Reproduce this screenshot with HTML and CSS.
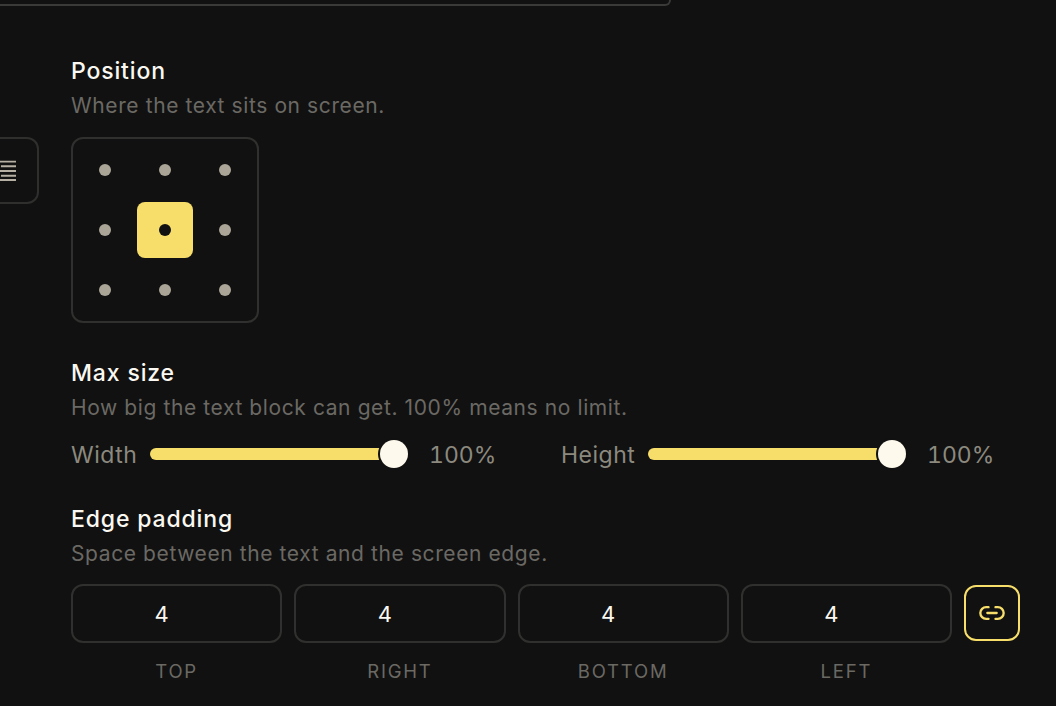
FILE: index.html
```html
<!DOCTYPE html>
<html lang="en">
  <head>
    <meta charset="UTF-8" />
    <title>Text settings</title>
    <link rel="stylesheet" href="styles.css">
  </head>
  <body>
    <div class="top-field"></div>

    <div class="layout">
      <div class="side">
        <div class="align-button">
          <svg class="align-icon" width="17" height="22" viewBox="0 0 17 22">
            <path d="M0 1h17M1 6h16M0 11h17M1 16h16M0 20.500h17" />
          </svg>
        </div>
      </div>

      <div class="content">
        <section class="position">
          <h2>Position</h2>
          <p class="hint">Where the text sits on screen.</p>
          <div class="pos-grid">
            <div class="cell"><span class="dot"></span></div>
            <div class="cell"><span class="dot"></span></div>
            <div class="cell"><span class="dot"></span></div>
            <div class="cell"><span class="dot"></span></div>
            <div class="cell active"><span class="dot"></span></div>
            <div class="cell"><span class="dot"></span></div>
            <div class="cell"><span class="dot"></span></div>
            <div class="cell"><span class="dot"></span></div>
            <div class="cell"><span class="dot"></span></div>
          </div>
        </section>

        <section class="max-size">
          <h2>Max size</h2>
          <p class="hint">How big the text block can get. 100% means no limit.</p>
          <div class="sliders">
            <div class="slider-group">
              <span class="slider-label">Width</span>
              <div class="track"><span class="thumb"></span></div>
              <span class="slider-value">100%</span>
            </div>
            <div class="slider-group">
              <span class="slider-label">Height</span>
              <div class="track"><span class="thumb"></span></div>
              <span class="slider-value">100%</span>
            </div>
          </div>
        </section>

        <section class="edge">
          <h2>Edge padding</h2>
          <p class="hint">Space between the text and the screen edge.</p>
          <div class="pad-row">
            <div class="pad-item">
              <div class="pad-input">4</div>
              <span class="pad-label">Top</span>
            </div>
            <div class="pad-item">
              <div class="pad-input">4</div>
              <span class="pad-label">Right</span>
            </div>
            <div class="pad-item">
              <div class="pad-input">4</div>
              <span class="pad-label">Bottom</span>
            </div>
            <div class="pad-item">
              <div class="pad-input">4</div>
              <span class="pad-label">Left</span>
            </div>
            <button class="link-button">
              <svg width="28" height="28" viewBox="0 0 24 24" fill="none" stroke="currentColor" stroke-width="2" stroke-linecap="round" stroke-linejoin="round">
                <path d="M9 17H7A5 5 0 0 1 7 7h2" />
                <path d="M15 7h2a5 5 0 1 1 0 10h-2" />
                <line x1="8" y1="12" x2="16" y2="12" />
              </svg>
            </button>
          </div>
        </section>
      </div>
    </div>
  </body>
</html>
```

FILE: styles.css
```css
* {
  box-sizing: border-box;
}

html,
body {
  height: 100%;
}

body {
  margin: 0;
  overflow: hidden;
  background-color: #111111;
  color: #faf8f0;
  font-family: Inter, "Noto Sans", sans-serif;
}

.top-field {
  width: 671px;
  height: 6px;
  border: 2px solid #3a3a38;
  border-top: none;
  border-left: none;
  border-radius: 0 0 12px 0;
}

.layout {
  display: flex;
  gap: 32px;
}

.side {
  width: 39px;
  padding-top: 131px;
}

.align-button {
  display: flex;
  align-items: center;
  justify-content: flex-end;
  height: 67px;
  padding-right: 21px;
  border: 2px solid #2f2f2d;
  border-left: none;
  border-radius: 0 12px 12px 0;
}

.align-icon {
  stroke: #b5b0a3;
  stroke-width: 2;
  fill: none;
}

.content {
  flex: 1;
  padding-top: 50px;
  padding-right: 36px;
}

h2 {
  margin: 0;
  font-size: 23px;
  line-height: 30px;
  font-weight: 500;
  letter-spacing: 0.85px;
}

.hint {
  margin: 5px 0 0;
  font-size: 21px;
  line-height: 30px;
  letter-spacing: 0.6px;
  color: #6b6964;
}

.pos-grid {
  display: grid;
  grid-template-columns: repeat(3, 56px);
  grid-auto-rows: 56px;
  gap: 4px;
  width: 188px;
  margin-top: 16px;
  padding: 3px 4px;
  border: 2px solid #30302e;
  border-radius: 12px;
}

.cell {
  display: flex;
  align-items: center;
  justify-content: center;
  border-radius: 8px;
}

.cell.active {
  background-color: #f7de6b;
}

.dot {
  width: 12px;
  height: 12px;
  border-radius: 50%;
  background-color: #aaa597;
}

.cell.active .dot {
  background-color: #111111;
}

.max-size {
  margin-top: 35px;
}

.sliders {
  display: flex;
  gap: 62px;
  margin-top: 16px;
}

.slider-group {
  display: flex;
  align-items: center;
  height: 30px;
}

.slider-label,
.slider-value {
  padding-top: 2px;
  font-size: 23px;
  letter-spacing: 0.5px;
  color: #8c897f;
}

.slider-group:first-child .slider-label {
  width: 79px;
}

.slider-group:last-child .slider-label {
  width: 87px;
}

.slider-value {
  width: 70px;
  margin-left: 21px;
  letter-spacing: 0;
  font-variant-numeric: tabular-nums;
}

.track {
  position: relative;
  width: 258px;
  height: 12px;
  border-radius: 6px;
  background-color: #f7de6b;
}

.thumb {
  position: absolute;
  top: -8px;
  right: 0;
  width: 28px;
  height: 28px;
  border-radius: 50%;
  background-color: #fdf9ec;
  box-shadow: 0 0 0 2px #111111;
}

.edge {
  margin-top: 35px;
}

.pad-row {
  display: flex;
  gap: 12px;
  margin-top: 15px;
}

.pad-item {
  flex: 1;
}

.pad-input {
  height: 59px;
  padding-right: 30px;
  border: 2px solid #30302e;
  border-radius: 12px;
  text-align: center;
  font-size: 22px;
  line-height: 57px;
}

.pad-label {
  display: block;
  margin-top: 16px;
  text-align: center;
  font-size: 18.500px;
  line-height: 24px;
  letter-spacing: 1.8px;
  text-transform: uppercase;
  color: #6b6964;
}

.link-button {
  display: flex;
  align-items: center;
  justify-content: center;
  flex: none;
  width: 56px;
  height: 56px;
  margin-top: 1px;
  padding: 0;
  border: 2px solid #f7de6b;
  border-radius: 12px;
  background: none;
  color: #f7de6b;
}
```
